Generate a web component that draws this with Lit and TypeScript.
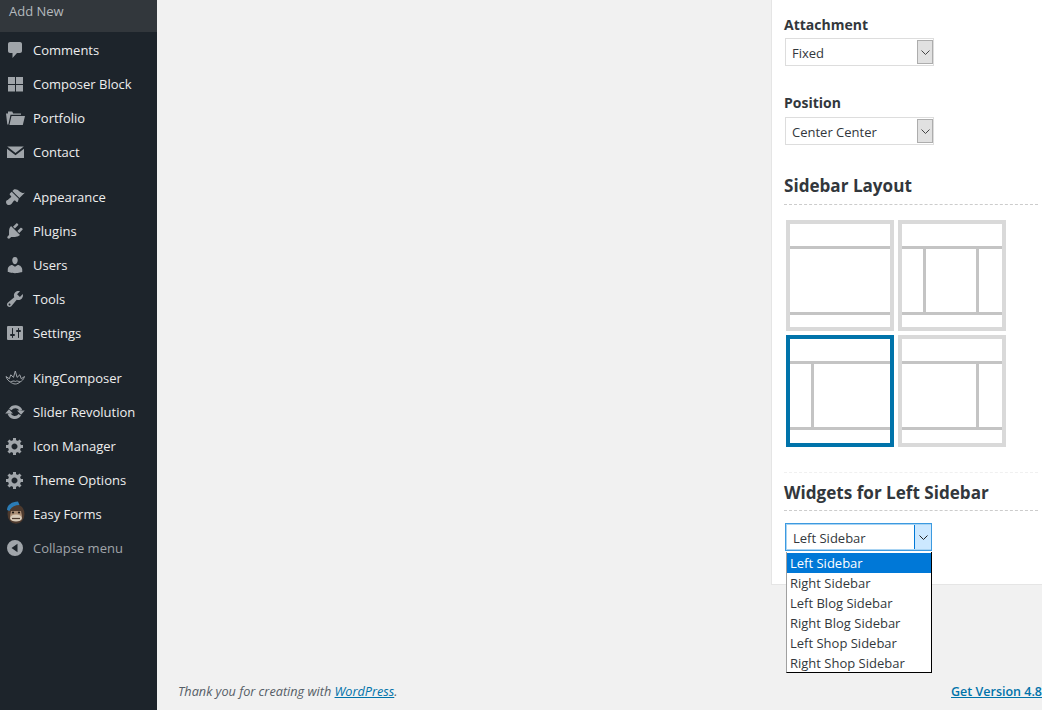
import { LitElement, html, css, svg } from "lit";
import { customElement } from "lit/decorators.js";

const gear = svg`<path d="M18 12h-2.180c-.17.7-.44 1.350-.81 1.930l1.540 1.540-2.100 2.100-1.540-1.540c-.58.36-1.230.63-1.910.79V19H8v-2.180c-.68-.16-1.330-.43-1.910-.79l-1.540 1.540-2.120-2.120 1.540-1.540c-.36-.58-.63-1.230-.79-1.910H1V9.030h2.170c.16-.7.44-1.350.8-1.940L2.430 5.550l2.100-2.100 1.540 1.540c.58-.37 1.240-.64 1.930-.81V2h3v2.180c.68.16 1.330.43 1.910.79l1.540-1.540 2.120 2.120-1.540 1.540c.36.59.64 1.240.8 1.940H18V12zm-8.500 1.500c1.660 0 3-1.340 3-3s-1.340-3-3-3-3 1.340-3 3 1.340 3 3 3z"/>`;

const icons: Record<string, unknown> = {
  comments: svg`<path d="M5 2h10c1.100 0 2 .9 2 2v7c0 1.100-.9 2-2 2h-3l-4.500 5v-5H5c-1.100 0-2-.9-2-2V4c0-1.100.9-2 2-2z"/>`,
  grid: svg`<rect x="3" y="3" width="7" height="7"/><rect x="11" y="3" width="7" height="7"/><rect x="3" y="11" width="7" height="6.500"/><rect x="11" y="11" width="7" height="6.500"/>`,
  folder: svg`<path d="M1 5.500h2V3.400h4.200l1 2.100H16v1.300H5.500L3.400 16.500H2.300zM6.500 8H20l-2.200 9H4.400z"/>`,
  mail: svg`<path d="M2.200 4.500h16.600L10.500 11zM2 6.800l8.500 6.400 8.500-6.400V16H2z"/>`,
  brush: svg`<path d="M14.480 11.060L7.410 3.990l1.500-1.500c.5-.56 2.300-.47 3.510.32 1.210.8 1.430 1.280 2.910 2.100 1.180.64 2.450 1.260 4.450.85zm-.71.71L6.700 4.700 4.930 6.470c-.39.39-.39 1.020 0 1.410l1.060 1.060c.39.39.39 1.030 0 1.420-.6.6-1.430 1.110-2.210 1.690-.35.26-.7.53-1.010.84C1.430 13.230 1 14.110 1 15c0 .82.32 1.590.89 2.160.57.58 1.350.9 2.180.9.86 0 1.710-.42 2.320-1.040.31-.31.58-.66.84-1.010.58-.78 1.090-1.600 1.690-2.210.39-.39 1.020-.39 1.410 0l1.060 1.060c.39.39 1.020.39 1.410 0z"/>`,
  plug: svg`<path d="M13.110 4.360L9.870 7.600 8 5.730l3.240-3.240c.35-.34 1.050-.2 1.560.32.52.51.66 1.210.31 1.550zm-8 1.770l.91-1.120 9.010 9.010-1.190.84c-.71.71-2.630 1.160-3.820 1.160H6.140L4.900 17.260c-.59.59-1.540.59-2.120 0-.59-.58-.59-1.530 0-2.120l1.240-1.240v-3.880c0-1.130.4-3.190 1.090-3.890zm7.260 3.970l3.240-3.240c.34-.35 1.040-.21 1.550.31.52.51.66 1.210.31 1.550l-3.240 3.250z"/>`,
  user: svg`<path d="M10 9.250c-2.270 0-2.730-3.440-2.730-3.440C7 4.020 7.820 2 9.970 2c2.160 0 2.980 2.020 2.710 3.810 0 0-.41 3.440-2.680 3.440zm0 2.570L12.720 10c2.390 0 4.520 2.330 4.520 4.530v2.490s-3.650 1.130-7.240 1.130c-3.650 0-7.240-1.130-7.240-1.130v-2.490c0-2.250 1.940-4.480 4.470-4.480z"/>`,
  wrench: svg`<path fill-rule="evenodd" d="M16.680 9.770c-1.340 1.340-3.300 1.670-4.950.99l-5.410 6.520c-.99.99-2.590.99-3.580 0s-.99-2.590 0-3.570l6.520-5.420c-.68-1.650-.35-3.610.99-4.950 1.280-1.280 3.120-1.620 4.720-1.060l-2.890 2.890 2.820 2.820 2.860-2.870c.53 1.580.18 3.390-1.080 4.650zM3.810 16.210c.4.39 1.040.39 1.430 0 .4-.4.4-1.040 0-1.430-.39-.4-1.030-.4-1.430 0-.39.39-.39 1.030 0 1.430z"/>`,
  sliders: svg`<rect x="2" y="3" width="16" height="14" rx="1"/><g fill="none" stroke="#1d242b" stroke-width="1" stroke-linecap="round"><path d="M7.500 5.500v9M13.500 5.500v9"/></g><g fill="none" stroke="#1d242b" stroke-width="2" stroke-linecap="round"><path d="M6 12h3M12 8h3"/></g>`,
  crown: svg`<g fill="none" stroke="currentColor" stroke-width="1"><path d="M1 8.500l3.300 2.300 1.500-4 2.700 2.600L10.300 3l1.800 6.400 2.700-2.600 1.500 4 3.200-2.300"/><path d="M1 8.500c1 3 2.500 4.500 4.500 5.500 1.800-.8 3.300-1.500 4.800-.5 1.500-1 3-.3 4.700.5 2-1 3.500-2.500 4.500-5.500"/><path d="M5.500 14c1 1 3 2 4.800 2s3.700-1 4.700-2"/></g>`,
  refresh: svg`<path fill="none" stroke="currentColor" stroke-width="3" d="M5.300 7.500A6 6 0 0 1 15.900 8.500M14.800 12.800A6 6 0 0 1 4.100 11.500"/><path d="M12 8.500h7.800L16 12.800zM8 11.500H.2L4 7.200z"/>`,
  gear,
  collapse: svg`<path fill-rule="evenodd" d="M10 2a8 8 0 1 1 0 16 8 8 0 0 1 0-16zm2.500 3.800L6.500 10l6 4.200z"/>`,
  monkey: svg`<g transform="translate(0 -3)"><ellipse cx="11" cy="13" rx="8.500" ry="9.800" fill="#4d3a2e"/><path d="M2 9C2 4 7 .5 13 .5l1.500 3.500C10 4 6 6 4.500 10z" fill="#2b7cb5"/><path d="M6 10h10l1 5-2 5H7l-2-5z" fill="#a98c74"/><ellipse cx="11" cy="17" rx="6" ry="3.600" fill="#d8cab8"/><circle cx="8" cy="11.500" r="1.100" fill="#1d1612"/><circle cx="14" cy="11.500" r="1.100" fill="#1d1612"/><path d="M7 17.500h8" stroke="#4d3a2e" stroke-width="1.200"/></g>`,
};

const menu = [
  [["comments", "Comments"], ["grid", "Composer Block"], ["folder", "Portfolio"], ["mail", "Contact"]],
  [["brush", "Appearance"], ["plug", "Plugins"], ["user", "Users"], ["wrench", "Tools"], ["sliders", "Settings"]],
  [["crown", "KingComposer"], ["refresh", "Slider Revolution"], ["gear", "Icon Manager"], ["gear", "Theme Options"], ["monkey", "Easy Forms"]],
];

const options = ["Left Sidebar", "Right Sidebar", "Left Blog Sidebar", "Right Blog Sidebar", "Left Shop Sidebar", "Right Shop Sidebar"];

const chevron = html`<svg class="chev" viewBox="0 0 9 5"><path d="M.5.5l4 4 4-4" fill="none" stroke="currentColor" stroke-width="1"/></svg>`;

@customElement("app-root")
export class AppRoot extends LitElement {
  static styles = css`
    :host {
      display: block;
      width: 1042px;
      height: 710px;
      overflow: hidden;
      font-family: "Open Sans", "Noto Sans", sans-serif;
      font-size: 13px;
      color: #32373c;
      background: #f1f1f1;
    }
    .page { display: grid; grid-template-columns: 157px 1fr; height: 710px; }
    .side { background: #1d242b; color: #eee; }
    .sub { height: 32px; background: #32373c; color: #b4b9be; padding: 1px 0 0 9px; box-sizing: border-box; line-height: 20px; margin-bottom: 1px; }
    .group { margin-bottom: 11px; }
    .item { display: flex; align-items: center; height: 34px; padding-left: 5px; gap: 8px; }
    .ic { width: 20px; height: 20px; fill: #a0a5aa; color: #a0a5aa; flex: none; overflow: visible; }
    .collapse { color: #a0a5aa; }
    .main { display: flex; flex-direction: column; min-width: 0; }
    .content { display: flex; justify-content: flex-end; height: 585px; flex: none; }
    .panel { width: 271px; height: 585px; box-sizing: border-box; background: #fff; border-left: 1px solid #e5e5e5; border-bottom: 1px solid #e5e5e5; padding: 15px 4px 0 12px; position: relative; }
    .label { font-weight: 700; font-size: 14px; line-height: 20px; color: #32373c; }
    .select { display: flex; width: 149px; height: 28px; box-sizing: border-box; border: 1px solid #ddd; background: #fff; margin: 3px 0 0 1px; padding: 1px 0 1px 1px; align-items: stretch; }
    .select .val { flex: 1; line-height: 26px; padding-left: 5px; font-size: 13px; color: #32373c; }
    .arrow { width: 16px; box-sizing: border-box; display: flex; align-items: center; justify-content: center; background: #e1e1e1; border: 1px solid #adadad; color: #444; }
    .chev { width: 9px; height: 5px; display: block; }
    .second { margin-top: 27px; }
    .second .select { margin-top: 4px; }
    h3 { margin: 0; font-size: 17.100px; line-height: 24px; font-weight: 700; color: #32373c; border-bottom: 1px dashed #ccc; padding-bottom: 6px; }
    .layout-h { margin-top: 29px; }
    .tiles { display: grid; grid-template-columns: 108px 108px; grid-template-rows: 111px 112px; gap: 4px; margin: 15px 0 0 2px; }
    .tile { border: 4px solid #d9d9d9; display: grid; grid-template-rows: 22px 3px 63px 3px 1fr; background: #fff; }
    .tile.on { border-color: #0073aa; }
    .h { background: #c4c4c4; }
    .body { display: flex; justify-content: space-between; }
    .body.left { justify-content: flex-start; padding-left: 21px; }
    .body.right { justify-content: flex-end; padding-right: 23px; }
    .body.both { padding: 0 23px 0 21px; }
    .v { width: 3px; background: #c4c4c4; }
    .faint { border-top: 1px dashed #f0f0f0; margin-top: 25px; }
    .widgets { margin-top: 8px; padding-bottom: 5px; }
    .focus { width: 147px; margin-top: 12px; border: 1px solid #3c9ae0; box-shadow: 0 0 0 1px #a9d4f3 inset; }
    .focus .val { padding-left: 6px; }
    .focus .arrow { background: #cce8ff; border: 1px solid #0078d7; border-width: 0 0 0 1px; width: 17px; color: #222; }
    .drop { position: absolute; left: 14px; top: 552px; width: 146px; height: 121px; box-sizing: border-box; background: #fff; border: 1px solid #000; border-left: 1px solid #a0a0a0; border-top: 0; z-index: 2; }
    .opt { height: 20px; line-height: 20px; padding-left: 3px; font-size: 13px; color: #32373c; }
    .opt.sel { background: #0078d7; color: #fff; margin-top: 1px; }
    .footer { display: flex; justify-content: space-between; align-items: center; height: 125px; padding: 89px 0 0 21px; box-sizing: border-box; margin-top: auto; line-height: 20px; color: #555d66; }
    .footer em { font-size: 12.700px; font-style: italic; margin-bottom: 2px; }
    a { color: #0073aa; text-decoration: underline; }
    .ver { font-weight: 600; font-size: 12.500px; }
  `;

  private tile(kind: string, on = false) {
    return html`<div class="tile ${on ? "on" : ""}">
      <div></div><div class="h"></div>
      <div class="body ${kind}">
        ${kind === "left" || kind === "both" ? html`<div class="v"></div>` : ""}
        ${kind === "right" || kind === "both" ? html`<div class="v"></div>` : ""}
      </div>
      <div class="h"></div><div></div>
    </div>`;
  }

  private item(ic: string, label: string) {
    return html`<div class="item"><svg class="ic" viewBox="0 0 20 20">${icons[ic]}</svg><span>${label}</span></div>`;
  }

  render() {
    return html`<div class="page">
      <nav class="side">
        <div class="sub">Add New</div>
        <div class="group">${menu[0].map(([i, l]) => this.item(i, l))}</div>
        <div class="group">${menu[1].map(([i, l]) => this.item(i, l))}</div>
        <div>
          ${menu[2].map(([i, l]) => this.item(i, l))}
          <div class="item collapse"><svg class="ic" viewBox="0 0 20 20">${icons.collapse}</svg><span>Collapse menu</span></div>
        </div>
      </nav>
      <main class="main">
        <div class="content">
          <section class="panel">
            <div class="label">Attachment</div>
            <div class="select"><span class="val">Fixed</span><span class="arrow">${chevron}</span></div>
            <div class="second">
              <div class="label">Position</div>
              <div class="select"><span class="val">Center Center</span><span class="arrow">${chevron}</span></div>
            </div>
            <h3 class="layout-h">Sidebar Layout</h3>
            <div class="tiles">
              ${this.tile("none")}${this.tile("both")}${this.tile("left", true)}${this.tile("right")}
            </div>
            <div class="faint"></div>
            <h3 class="widgets">Widgets for Left Sidebar</h3>
            <div class="select focus"><span class="val">Left Sidebar</span><span class="arrow">${chevron}</span></div>
            <div class="drop">
              ${options.map((o, i) => html`<div class="opt ${i === 0 ? "sel" : ""}">${o}</div>`)}
            </div>
          </section>
        </div>
        <footer class="footer">
          <em>Thank you for creating with <a href="#">WordPress</a>.</em>
          <a class="ver" href="#">Get Version 4.8</a>
        </footer>
      </main>
    </div>`;
  }
}
